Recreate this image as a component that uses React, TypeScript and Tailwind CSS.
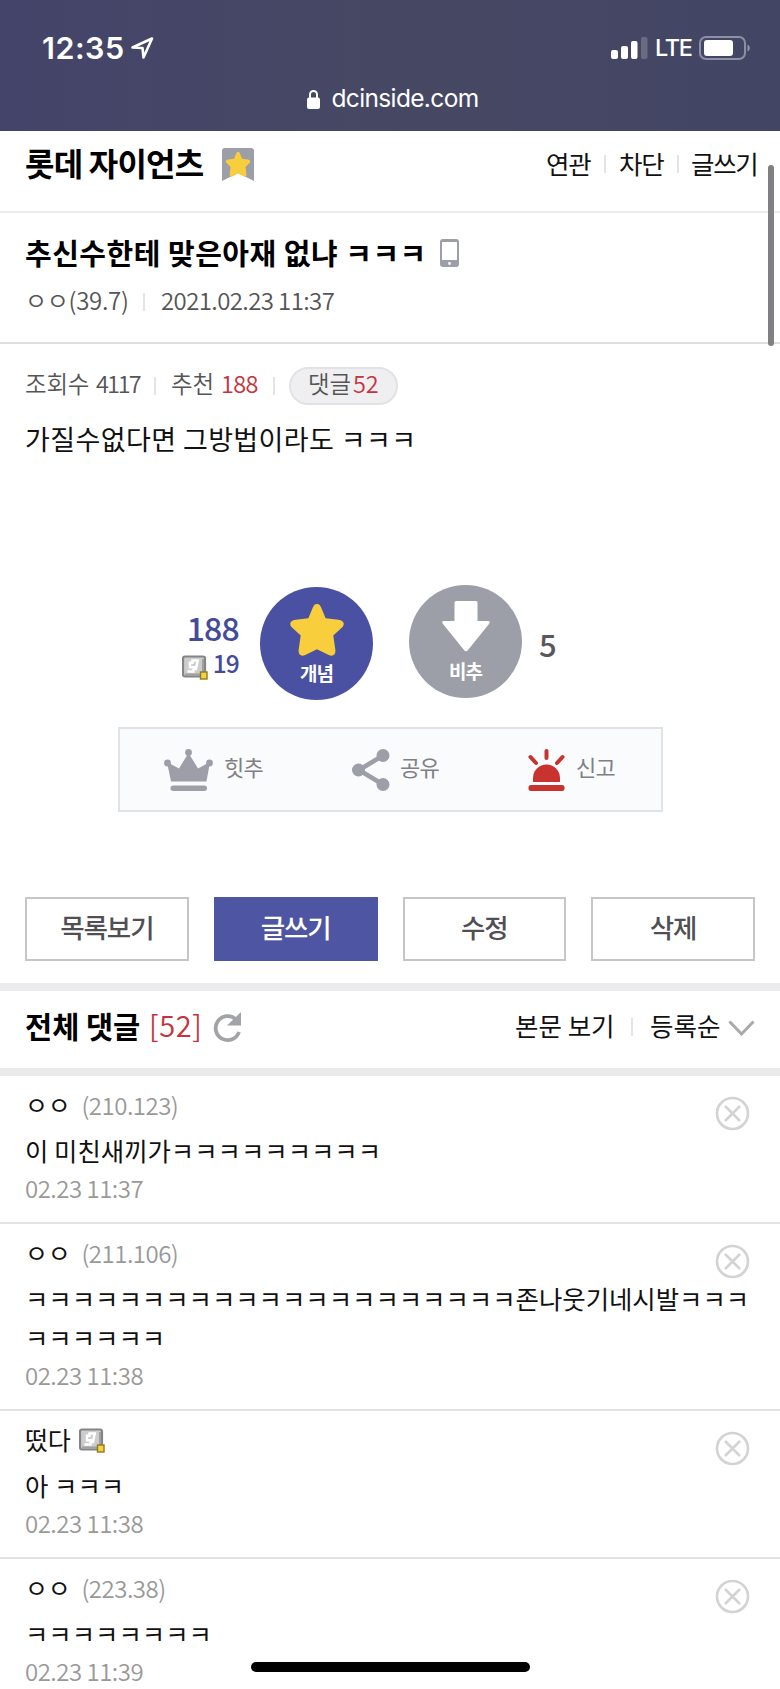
import React from "react";

type CommentType = {
    id: number;
    name: string;
    ip?: string;
    badge?: boolean;
    lines: string[];
    date: string;
};

const comments: CommentType[] = [
    {
        id: 1,
        name: "ㅇㅇ",
        ip: "(210.123)",
        lines: ["이 미친새끼가ㅋㅋㅋㅋㅋㅋㅋㅋㅋ"],
        date: "02.23 11:37",
    },
    {
        id: 2,
        name: "ㅇㅇ",
        ip: "(211.106)",
        lines: ["ㅋㅋㅋㅋㅋㅋㅋㅋㅋㅋㅋㅋㅋㅋㅋㅋㅋㅋㅋㅋㅋ존나웃기네시발ㅋㅋㅋ", "ㅋㅋㅋㅋㅋㅋ"],
        date: "02.23 11:38",
    },
    {
        id: 3,
        name: "떴다",
        badge: true,
        lines: ["아 ㅋㅋㅋ"],
        date: "02.23 11:38",
    },
    {
        id: 4,
        name: "ㅇㅇ",
        ip: "(223.38)",
        lines: ["ㅋㅋㅋㅋㅋㅋㅋㅋ"],
        date: "02.23 11:39",
    },
];

const STAR =
    "M27 2 C29.5 2 30.5 4 31.5 6.5 L35.5 16 L48 17.5 C53 18 55 21.5 51.5 25 L43 33 L45 47 C45.6 52 42.5 54 38.5 52 L27 46.5 L15.5 52 C11.5 54 8.4 52 9 47 L11 33 L2.5 25 C-1 21.5 1 18 6 17.5 L18.5 16 L22.5 6.5 C23.5 4 24.5 2 27 2 Z";

const Divider: React.FC<{ className?: string }> = ({ className }) => (
    <span className={`block w-[2px] h-[18px] bg-[#e4e4e6] ${className}`} />
);

const GallogBadge: React.FC = () => (
    <svg width="26" height="25" viewBox="0 0 26 25">
        <rect x="1" y="1.5" width="22" height="20" rx="2" fill="#cdcdcd" stroke="#858587" strokeWidth="2.2" />
        <path d="M3 19.5h18M21 4v15" stroke="#a0a0a2" strokeWidth="2" />
        <path d="M17 5.500h-6.500v2.200H8v4.500h6M15.500 6.500l-1.500 7.500h-2.500v2.500H5.500" stroke="#fff" strokeWidth="2.4" fill="none" />
        <rect x="18.5" y="17" width="6.5" height="7" fill="#f5d33b" stroke="#8d7a26" strokeWidth="1.4" />
    </svg>
);

const StatusBar: React.FC = () => (
    <header className="h-[131px] text-white font-['Inter',sans-serif] bg-linear-to-r from-[#44446a] via-[#464863] to-[#434565]">
        <div className="h-[74px] pt-[22px] pl-[42px] pr-[29px] flex items-center justify-between">
            <div className="flex items-center">
                <span className="w-[83px] text-[30.5px] font-semibold tracking-[0.5px] whitespace-nowrap">12:35</span>
                <svg className="ml-[6px]" width="23" height="22" viewBox="0 0 23 22">
                    <path d="M1.5 10.5 L21 1.5 L12.5 20.5 L11.5 11 Z" fill="none" stroke="#fff" strokeWidth="2.6" strokeLinejoin="round" />
                </svg>
            </div>
            <div className="flex items-center">
                <svg width="37" height="24" viewBox="0 0 37 24" fill="#fff">
                    <rect x="0" y="14" width="7" height="9" rx="2" />
                    <rect x="10" y="10" width="7" height="13" rx="2" />
                    <rect x="20" y="5" width="6.5" height="18" rx="2" />
                    <rect x="30" y="1" width="6.5" height="22" rx="2" opacity=".2" />
                </svg>
                <span className="w-[36px] ml-[7px] text-[23.5px] font-medium tracking-[-1.3px]">LTE</span>
                <svg className="ml-[8px]" width="52" height="24" viewBox="0 0 52 24">
                    <rect x="1" y="1" width="45" height="22" rx="6" fill="none" stroke="#fff" strokeOpacity=".4" strokeWidth="2" />
                    <rect x="5" y="4" width="29" height="16" rx="3" fill="#fff" />
                    <path d="M48.5 8.5c3 1.5 3 5.500 0 7z" fill="#fff" opacity=".45" />
                </svg>
            </div>
        </div>
        <div className="h-[49px] flex items-center justify-center pl-[5px]">
            <svg width="13" height="20" viewBox="0 0 13 20">
                <path d="M3 9V5.500a3.500 3.500 0 0 1 7 0V9" fill="none" stroke="#fff" strokeWidth="2" />
                <rect x="0" y="8.500" width="13" height="11.500" rx="2" fill="#fff" />
            </svg>
            <span className="ml-[12px] text-[24.5px] tracking-[-0.65px]">dcinside.com</span>
        </div>
    </header>
);

const GalleryHeader: React.FC = () => (
    <div className="h-[82px] pb-[16px] pl-[25px] pr-[24px] flex items-center justify-between border-b-2 border-[#ececee]">
        <div className="flex items-center">
            <h1 className="w-[180px] pb-[2px] text-[32px] font-bold tracking-[-0.8px] whitespace-nowrap">롯데 자이언츠</h1>
            <svg className="mt-[3px] ml-[17px]" width="32" height="33" viewBox="0 0 32 33">
                <path d="M0 3a3 3 0 0 1 3-3h26a3 3 0 0 1 3 3v30l-16-8-16 8z" fill="#9c9ea8" />
                <g transform="translate(3.500 2.800) scale(.465 .49)">
                    <path d={STAR} fill="#f8ce3c" />
                </g>
            </svg>
        </div>
        <nav className="flex items-center text-[25.5px] tracking-[-1.3px] text-[#111] whitespace-nowrap">
            <span className="w-[45px]">연관</span>
            <Divider className="mt-[2px] ml-[13px] mr-[13px]" />
            <span className="w-[45px]">차단</span>
            <Divider className="mt-[2px] ml-[13px] mr-[12px]" />
            <span className="w-[65px]">글쓰기</span>
        </nav>
    </div>
);

const PostTitle: React.FC = () => (
    <div className="h-[131px] pl-[25px] border-b-2 border-[#dfdfe0]">
        <div className="h-[80px] flex items-center">
            <h2 className="w-[402px] text-[29px] font-bold text-black tracking-[0.5px] whitespace-nowrap">추신수한테 맞은아재 없냐 ㅋㅋㅋ</h2>
            <svg className="ml-[13px]" width="19" height="28" viewBox="0 0 19 28">
                <rect width="19" height="28" rx="3" fill="#9c9ea8" />
                <rect x="2" y="3" width="15" height="18" fill="#fff" />
                <circle cx="9.500" cy="24.500" r="1.400" fill="#fff" />
            </svg>
        </div>
        <div className="h-[18px] flex items-center text-[24px] font-[350] text-[#555] whitespace-nowrap">
            <span className="w-[118px] pb-[4px] tracking-[-0.3px]">ㅇㅇ(39.7)</span>
            <Divider className="mr-[16px]" />
            <span className="pb-[4px] tracking-[-0.6px]">2021.02.23 11:37</span>
        </div>
    </div>
);

const PostBody: React.FC = () => (
    <div className="h-[240px] pt-[22px] pl-[25px] whitespace-nowrap">
        <div className="h-[40px] flex items-center text-[23.5px] font-[350] text-[#555] tracking-[-0.2px]">
            <span className="w-[71px] pb-[5px]">조회수</span>
            <span className="w-[58px] pb-[5px] tracking-[-2px]">4117</span>
            <Divider className="mr-[15px]" />
            <span className="w-[50px] pb-[5px]">추천</span>
            <span className="w-[52px] pb-[5px] text-[#c5343d] tracking-[-0.7px]">188</span>
            <Divider className="mr-[14px]" />
            <div className="w-[109px] h-[38px] rounded-full bg-[#efeff1] border-2 border-[#e2e2e4] flex items-center pl-[17px]">
                <span className="w-[45px] pb-[5px]">댓글</span>
                <span className="pb-[5px] text-[#c5343d]">52</span>
            </div>
        </div>
        <p className="mt-[13px] h-[40px] leading-[40px] text-[27px] text-[#111] tracking-[0.4px]">가질수없다면 그방법이라도 ㅋㅋㅋ</p>
    </div>
);

const VoteArea: React.FC = () => (
    <div className="h-[143px] flex pl-[182px] font-medium">
        <div className="w-[57px] pt-[25px] flex flex-col items-end text-[#454b9b]">
            <span className="h-[36px] leading-[36px] text-[32px] tracking-[-0.8px]">188</span>
            <span className="w-full h-[36px] flex items-center justify-between">
                <span className="pt-[9px]"><GallogBadge /></span>
                <span className="text-[24.5px] leading-[30px] tracking-[-0.8px]">19</span>
            </span>
        </div>
        <button className="mt-[3px] ml-[21px] w-[113px] h-[113px] rounded-full bg-[#4a51a3] flex flex-col items-center text-white">
            <svg className="mt-[15px]" width="56" height="55" viewBox="0 0 54 54">
                <path d={STAR} fill="#f8ce3c" />
            </svg>
            <span className="mt-[1px] h-[30px] leading-[30px] text-[19px] font-bold tracking-[-1px]">개념</span>
        </button>
        <button className="mt-[1px] ml-[36px] w-[113px] h-[113px] rounded-full bg-[#9c9ea8] flex flex-col items-center text-white">
            <svg className="mt-[16px]" width="48" height="51" viewBox="0 0 48 51">
                <path d="M14 0h20q1.500 0 1.500 1.500V20H46q3 0 1 3L26 49q-2 2.500-4 0L1 23q-2-3 1-3h10.500V1.500Q12.500 0 14 0z" fill="#fff" />
            </svg>
            <span className="mt-[4px] h-[30px] leading-[30px] text-[19px] font-bold tracking-[-1px]">비추</span>
        </button>
        <span className="ml-[17px] mt-[40px] h-[40px] leading-[40px] text-[31px] text-[#58585c]">5</span>
    </div>
);

const ActionBox: React.FC = () => (
    <div className="ml-[118px] w-[545px] h-[85px] border-2 border-[#dfe3e5] bg-[#f9fbfd] flex items-center text-[22px] text-[#808083] tracking-[-0.8px] whitespace-nowrap">
        <svg className="ml-[44px]" width="49" height="42" viewBox="0 0 49 42" fill="#9c9ea8">
            <path d="M3 13l12 6.500L24.500 4 34 19.500 46 13 42.500 32.500H7z" />
            <circle cx="24.500" cy="3.500" r="3.400" />
            <circle cx="3.500" cy="14" r="3.400" />
            <circle cx="45.500" cy="14" r="3.400" />
            <rect x="6.500" y="36.500" width="36.500" height="5.500" rx="2.700" />
        </svg>
        <span className="ml-[11px] w-[40px] pb-[6px]">힛추</span>
        <svg className="ml-[88px]" width="38" height="42" viewBox="0 0 38 42" fill="#9c9ea8">
            <path d="M31 6.500L7 21l24 14.500" fill="none" stroke="#9c9ea8" strokeWidth="4.600" />
            <circle cx="31" cy="6.500" r="6.500" />
            <circle cx="6.500" cy="21" r="6.500" />
            <circle cx="31" cy="35.500" r="6.500" />
        </svg>
        <span className="ml-[10px] w-[40px] pb-[6px]">공유</span>
        <svg className="ml-[88px]" width="37" height="42" viewBox="0 0 37 42" fill="#c8322f">
            <path d="M5 33V29a13.500 13.500 0 0 1 27 0v4z" />
            <rect x="0.500" y="36" width="36" height="6" rx="2.500" />
            <path d="M18.500 2V9M2.500 8l5.500 6M34.500 8l-5.500 6" stroke="#c8322f" strokeWidth="4" strokeLinecap="round" />
        </svg>
        <span className="ml-[11px] pb-[6px]">신고</span>
    </div>
);

const Buttons: React.FC = () => (
    <div className="mt-[85px] mx-[25px] h-[64px] grid grid-cols-4 gap-[25px] text-[26.5px] font-medium text-[#505054] tracking-[-1.1px]">
        <button className="border-2 border-[#c6c6c9] pb-[5px]">목록보기</button>
        <button className="bg-[#4e56a3] text-white pb-[5px]">글쓰기</button>
        <button className="border-2 border-[#c6c6c9] pb-[5px]">수정</button>
        <button className="border-2 border-[#c6c6c9] pb-[5px]">삭제</button>
    </div>
);

const CommentHeader: React.FC = () => (
    <div className="mt-[22px] h-[93px] border-y-8 border-[#ebebee] pl-[25px] pr-[25px] pb-[5px] flex items-center justify-between whitespace-nowrap">
        <div className="flex items-center">
            <h3 className="w-[124px] pb-[4px] text-[29.5px] font-bold tracking-[0px]">전체 댓글</h3>
            <span className="w-[63px] pb-[4px] text-[29px] font-[350] text-[#c5343d] tracking-[0.6px]">[52]</span>
            <svg width="30" height="31" viewBox="0 0 30 31">
                <path d="M23.500 7A12 12 0 1 0 27 20" fill="none" stroke="#a2a3a7" strokeWidth="3.800" />
                <path d="M29 0v13.500H15z" fill="#a2a3a7" />
            </svg>
        </div>
        <div className="flex items-center text-[25.5px] text-[#111] tracking-[0px]">
            <span className="w-[116px] pb-[3px]">본문 보기</span>
            <Divider className="mr-[17px]" />
            <span className="w-[78px] pb-[3px]">등록순</span>
            <svg className="mt-[2px]" width="27" height="16" viewBox="0 0 27 16">
                <path d="M1.500 1.500l12 12.500 12-12.500" fill="none" stroke="#aaaaad" strokeWidth="3" />
            </svg>
        </div>
    </div>
);

const CommentItem: React.FC<{ item: CommentType }> = ({ item }) => (
    <li className="pt-[11px] pb-[13px] pl-[25px] pr-[30px] border-b-2 border-[#e2e2e4] flex justify-between whitespace-nowrap">
        <div className="w-0">
            <div className="h-[36px] flex items-center text-[25px] tracking-[-0.3px]">
                <span className="text-[#111]">{item.name}</span>
                {item.ip && <span className="ml-[11px] text-[24px] font-[350] text-[#999] tracking-[-0.5px]">{item.ip}</span>}
                {item.badge && <span className="ml-[9px]"><GallogBadge /></span>}
            </div>
            <div className="mt-[8px] text-[25.4px] leading-[39px] text-[#111]">
                {item.lines.map((line, i) => (
                    <p key={i}>{line}</p>
                ))}
            </div>
            <div className="h-[39px] leading-[36px] text-[24px] font-[350] text-[#999] tracking-[-0.5px]">{item.date}</div>
        </div>
        <svg className="mt-[9px] shrink-0" width="35" height="35" viewBox="0 0 35 35" fill="none" stroke="#d3d3d6" strokeWidth="2.600">
            <circle cx="17.500" cy="17.500" r="15.500" />
            <path d="M10 10l15 15M25 10L10 25" />
        </svg>
    </li>
);

const App: React.FC = () => {
    return (
        <div className="relative w-[780px] h-[1689px] overflow-hidden bg-white font-['Noto_Sans_CJK_KR',sans-serif]">
            <StatusBar />
            <GalleryHeader />
            <PostTitle />
            <PostBody />
            <VoteArea />
            <ActionBox />
            <Buttons />
            <CommentHeader />
            <ul>
                {comments.map((item) => (
                    <CommentItem key={item.id} item={item} />
                ))}
            </ul>
            {/* scroll indicator and home bar float over the page */}
            <div className="absolute right-[6px] top-[165px] w-[6px] h-[181px] rounded-full bg-[#808082]" />
            <div className="absolute left-[251px] bottom-[17px] w-[279px] h-[10px] rounded-full bg-black" />
        </div>
    );
};

export default App;
